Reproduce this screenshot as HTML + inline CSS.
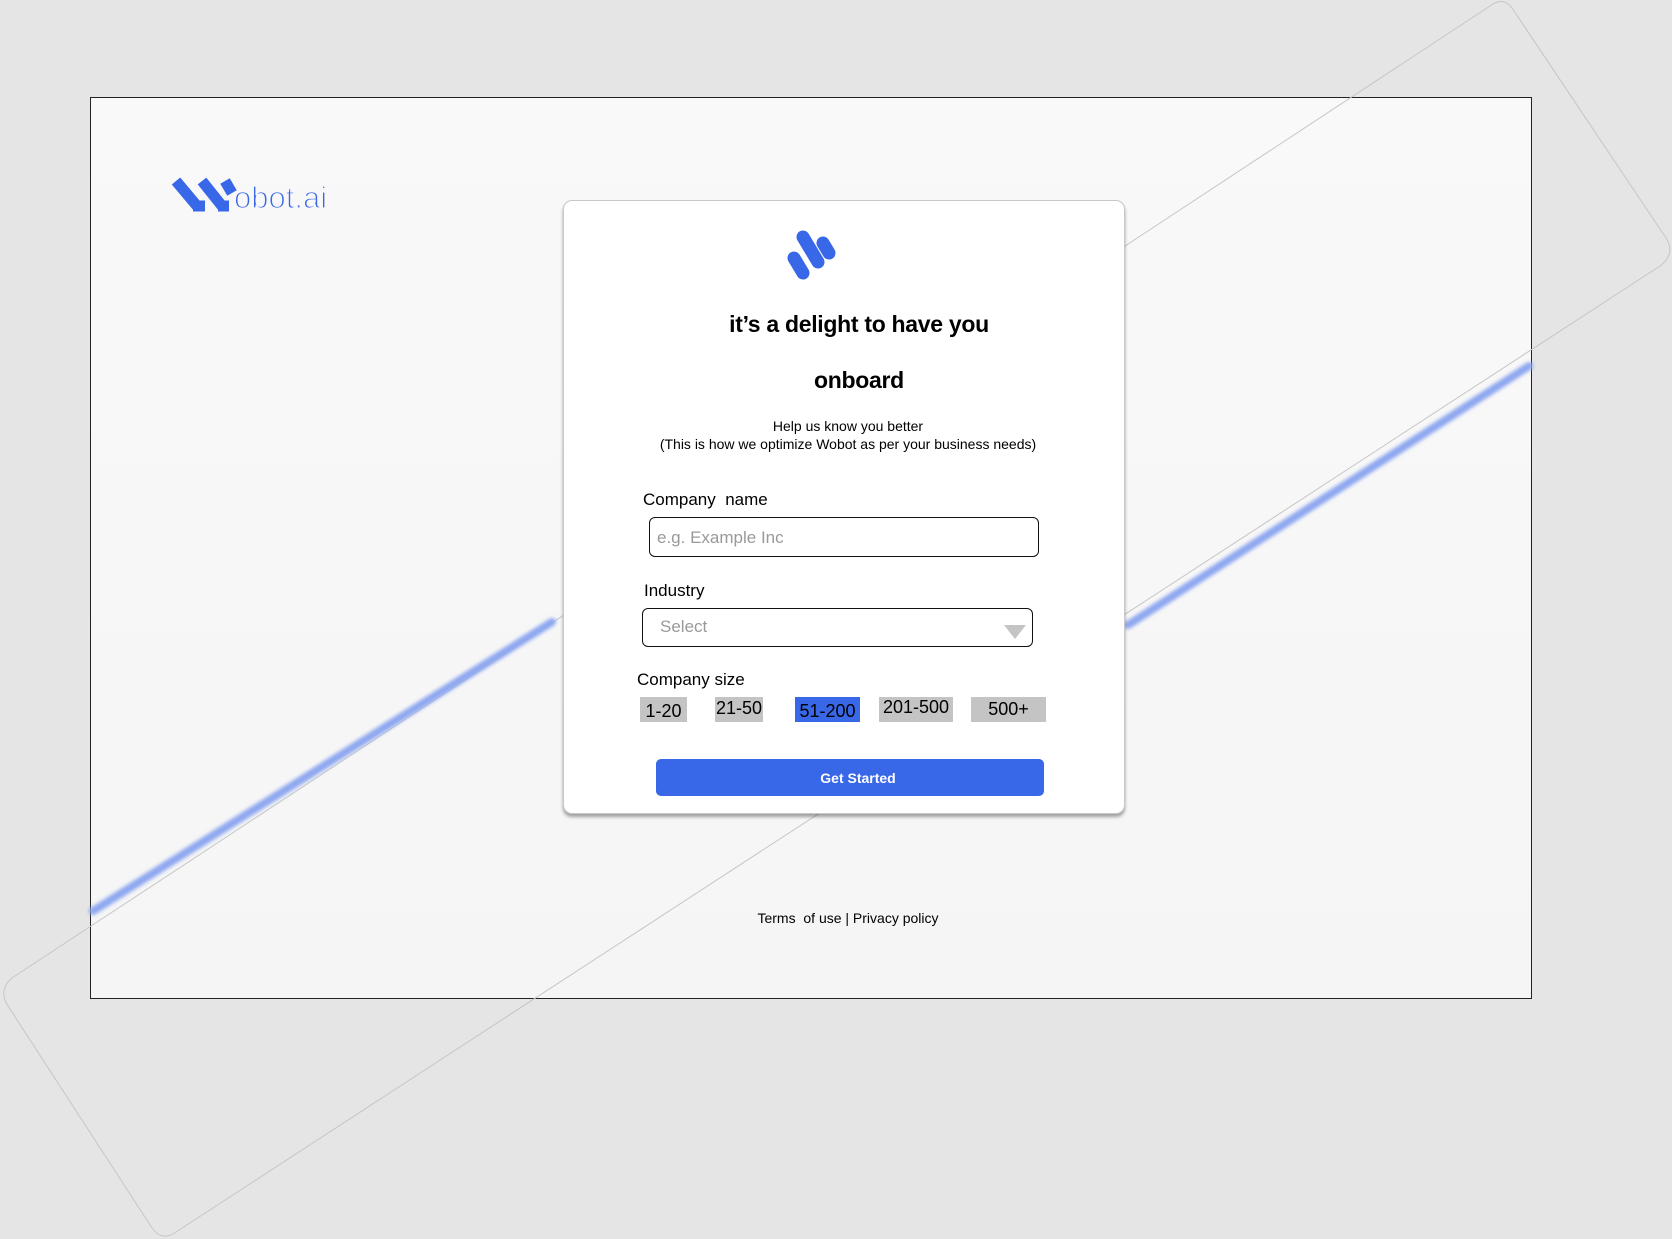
<!DOCTYPE html>
<html><head><meta charset="utf-8"><style>
*{margin:0;padding:0;box-sizing:border-box}
body{width:1672px;height:1239px;background:#e5e5e5;position:relative;overflow:hidden;font-family:"Liberation Sans",Arial,sans-serif;color:#000}
.frame{position:absolute;left:90px;top:97px;width:1442px;height:902px;background:linear-gradient(#f9f9f9,#f5f5f5);border:1px solid #222}
.abs{position:absolute}
.card{position:absolute;left:563px;top:200px;width:562px;height:614px;background:#fff;border:1px solid #c8c8c8;border-radius:9px;box-shadow:0 3px 3px rgba(0,0,0,.35)}
.t{position:absolute;white-space:nowrap}
.chip{position:absolute;background:#c4c4c4;font-size:18px;text-align:center;line-height:25px;height:25px}
</style></head><body>
<div class="frame"></div>
<svg class="abs" style="left:0;top:0" width="1672" height="1239">
<defs><filter id="b"><feGaussianBlur stdDeviation="1.8"/></filter></defs>
<path d="M1490 6 Q1503 -4 1512 8 L1666 238 Q1676 254 1660 266 L176 1232 Q162 1242 152 1228 L8 1006 Q-2 990 12 978 Z" fill="none" stroke="#c6c6c6" stroke-width="1"/>
<g filter="url(#b)" stroke="#8ea7f0" stroke-width="8" stroke-linecap="round">
<line x1="93" y1="911" x2="552" y2="622"/>
<line x1="1128" y1="625" x2="1529" y2="366"/>
</g>
<g fill="none" stroke="#3867e8" stroke-width="11" stroke-linejoin="miter">
<path d="M176 181 L197 206"/>
<path d="M193 206 L205 206"/>
<path d="M202 181 L222 206"/>
<path d="M218 206 L229 206"/>
<path d="M225 181 L232 193"/>
</g>
<text x="234" y="208" font-family="Liberation Sans" font-size="31" fill="#3867e8" stroke="#f8f8f8" stroke-width="1.3">obot.ai</text>
</svg>
<div class="card">
<svg class="abs" style="left:0;top:0" width="562" height="120">
<g stroke="#3867e8" stroke-width="13" stroke-linecap="round">
<line x1="239" y1="36" x2="254" y2="61"/>
<line x1="259" y1="42" x2="265" y2="52"/>
<line x1="230" y1="57" x2="239" y2="72"/>
</g>
</svg>
<div class="t" style="left:0;width:590px;text-align:center;top:110px;font-size:23px;font-weight:bold;letter-spacing:-0.3px">it’s a delight to have you</div>
<div class="t" style="left:0;width:590px;text-align:center;top:166px;font-size:23px;font-weight:bold;letter-spacing:-0.3px">onboard</div>
<div class="t" style="left:0;width:568px;text-align:center;top:216px;font-size:14px;line-height:18px">Help us know you better<br>(This is how we optimize Wobot as per your business needs)</div>
<div class="t" style="left:79px;top:289px;font-size:17px">Company&nbsp; name</div>
<div class="abs" style="left:85px;top:316px;width:390px;height:40px;border:1px solid #111;border-radius:6px"></div>
<div class="t" style="left:93px;top:327px;font-size:17px;color:#999">e.g. Example Inc</div>
<div class="t" style="left:80px;top:380px;font-size:17px">Industry</div>
<div class="abs" style="left:78px;top:407px;width:391px;height:39px;border:1px solid #111;border-radius:6px"></div>
<div class="t" style="left:96px;top:416px;font-size:17px;color:#999">Select</div>
<div class="abs" style="left:440px;top:424px;width:0;height:0;border-left:11px solid transparent;border-right:11px solid transparent;border-top:14px solid #c4c4c4"></div>
<div class="t" style="left:73px;top:469px;font-size:17px">Company size</div>
<div class="chip" style="left:76px;top:496px;width:47px;padding-top:2px">1-20</div>
<div class="chip" style="left:151px;top:496px;width:48px;line-height:22px">21-50</div>
<div class="chip" style="left:231px;top:496px;width:65px;background:#3867e8;padding-top:2px">51-200</div>
<div class="chip" style="left:315px;top:496px;width:74px;line-height:20px">201-500</div>
<div class="chip" style="left:407px;top:496px;width:75px">500+</div>
<div class="abs" style="left:92px;top:558px;width:388px;height:37px;background:#3867e8;border-radius:5px;color:#fff;font-weight:bold;font-size:14px;text-align:center;line-height:39px;padding-left:16px">Get Started</div>
</div>
<div class="t" style="left:0;width:1696px;text-align:center;top:910px;font-size:14px">Terms&nbsp; of use | Privacy policy</div>
</body></html>
